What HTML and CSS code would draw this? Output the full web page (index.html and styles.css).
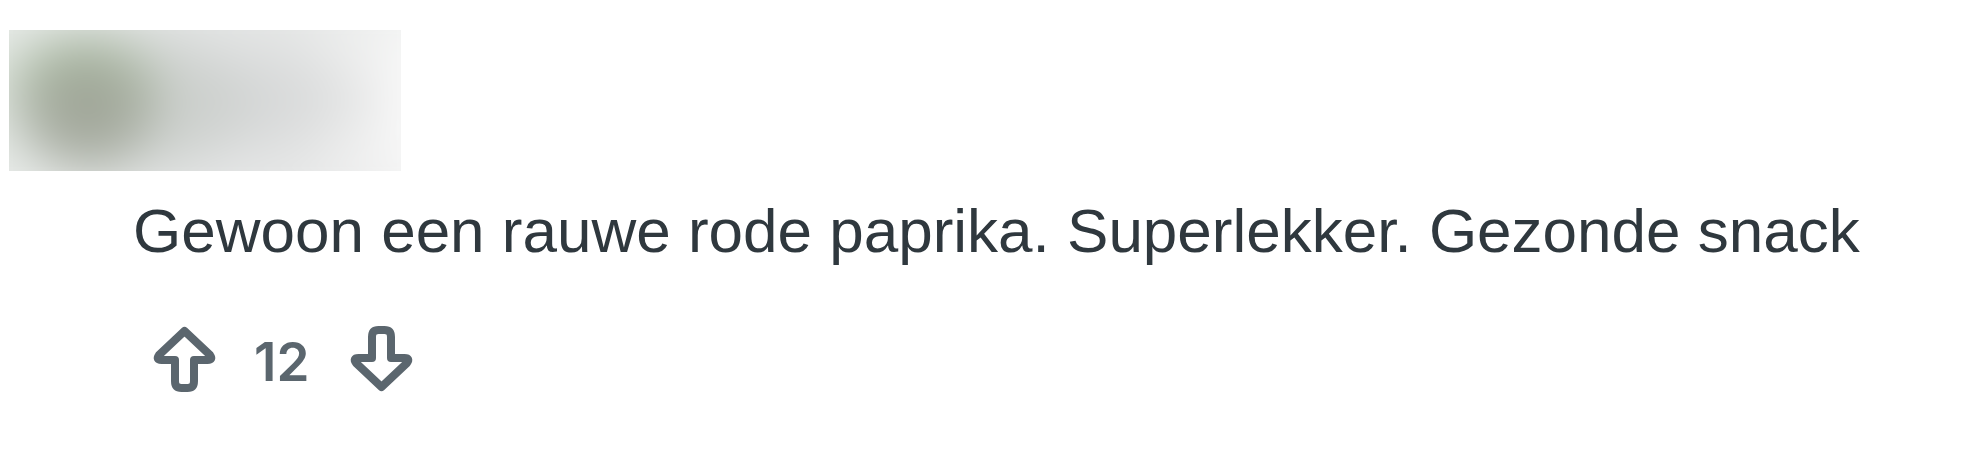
FILE: index.html
```html
<!DOCTYPE html>
<html lang="nl">
<head>
<meta charset="utf-8">
<title>Reactie</title>
<link rel="stylesheet" href="styles.css">
</head>
<body>
<div class="comment">
  <div class="author-blur"><div class="blur-inner"></div></div>
  <p class="comment-body">Gewoon een rauwe rode paprika. Superlekker. Gezonde snack</p>
  <div class="actions">
    <svg class="vote" width="70" height="76" viewBox="0 0 70 76" aria-label="upvote">
      <path d="M34.5 10 L9 34 Q5.5 39 11.5 39 L25 39 L25 60 Q25 67 31.5 67 L37.5 67 Q44 67 44 60 L44 39 L57.5 39 Q63.5 39 60 34 Z" fill="none" stroke="currentColor" stroke-width="8" stroke-linejoin="round"/>
    </svg>
    <span class="score">12</span>
    <svg class="vote down" width="70" height="76" viewBox="0 0 70 76" aria-label="downvote">
      <path d="M34.5 10 L9 34 Q5.5 39 11.5 39 L25 39 L25 60 Q25 67 31.5 67 L37.5 67 Q44 67 44 60 L44 39 L57.5 39 Q63.5 39 60 34 Z" fill="none" stroke="currentColor" stroke-width="8" stroke-linejoin="round"/>
    </svg>
  </div>
</div>
</body>
</html>
```
FILE: styles.css
```css
html, body {
  margin: 0;
  padding: 0;
  background: #ffffff;
}

.comment {
  font-family: "Liberation Sans", Arial, sans-serif;
}

.author-blur {
  margin: 30px 0 0 9px;
  width: 392px;
  height: 141px;
  overflow: hidden;
  position: relative;
  background: #eceeec;
}

.blur-inner {
  position: absolute;
  inset: -40px;
  filter: blur(18px);
  background:
    radial-gradient(ellipse 85px 75px at 118px 122px, rgba(158,163,150,1) 0%, rgba(162,167,155,0.7) 50%, rgba(170,172,165,0) 100%),
    radial-gradient(ellipse 95px 65px at 112px 90px, rgba(160,182,150,0.95) 0%, rgba(165,185,155,0) 100%),
    radial-gradient(ellipse 150px 90px at 150px 115px, rgba(190,196,188,0.85) 0%, rgba(190,196,188,0) 100%),
    radial-gradient(ellipse 170px 60px at 260px 110px, rgba(212,214,214,1) 0%, rgba(212,214,214,0) 100%),
    linear-gradient(to bottom, rgba(235,238,236,0.6) 0px, rgba(235,238,236,0) 80px, rgba(235,236,236,0) 150px, rgba(238,239,239,0.7) 221px),
    linear-gradient(to right, #e6ebe6 0px, #dee2df 90px, #dadcdc 200px, #e1e2e2 320px, #f2f2f2 410px, #fafafa 450px, #fcfcfc 472px);
}

.comment-body {
  margin: 24px 0 0 0;
  padding-left: 133px;
  font-size: 62px;
  line-height: 72px;
  color: #2f383e;
  white-space: nowrap;
}

.actions {
  display: flex;
  align-items: center;
  gap: 34px;
  margin-top: 54px;
  padding-left: 150px;
  color: #5b666e;
}

.vote {
  display: block;
}

.vote.down {
  transform: scaleY(-1);
  margin-left: 4px;
}

.score {
  font-family: Inter, "Liberation Sans", sans-serif;
  font-size: 53px;
  font-weight: 600;
  line-height: 60px;
  padding-top: 6px;
}
```
